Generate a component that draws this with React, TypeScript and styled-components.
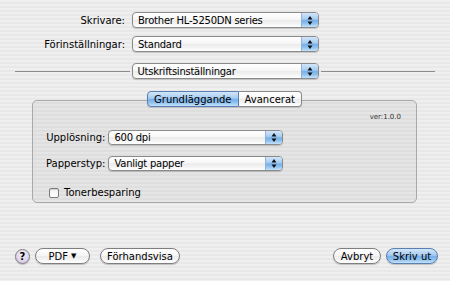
import React from 'react';
import styled, { createGlobalStyle, css } from 'styled-components';

const GlobalStyle = createGlobalStyle`
  html, body {
    margin: 0;
    padding: 0;
  }
  body {
    font-family: "DejaVu Sans", "Liberation Sans", sans-serif;
    font-size: 10px;
    color: #000;
  }
`;

const aquaBlue = css`
  background: linear-gradient(
    to bottom,
    #d2e6fa 0%,
    #a4cbf1 45%,
    #78afe7 52%,
    #8fc1ef 75%,
    #c4e2fb 100%
  );
`;

const aquaWhite = css`
  background: linear-gradient(
    to bottom,
    #ffffff 0%,
    #f7f7f7 45%,
    #ebebeb 52%,
    #f3f3f3 75%,
    #ffffff 100%
  );
`;

const Window = styled.div`
  width: 450px;
  height: 281px;
  box-sizing: border-box;
  padding: 12px 0 17px 0;
  display: flex;
  flex-direction: column;
  background: repeating-linear-gradient(
    to bottom,
    #efefef 0px,
    #efefef 2px,
    #e8e8e8 2px,
    #e8e8e8 4px
  );
`;

const TopForm = styled.div`
  display: grid;
  grid-template-columns: 125px 187px;
  column-gap: 7px;
  row-gap: 8px;
  align-items: center;
`;

const Label = styled.span`
  text-align: right;
  white-space: nowrap;
`;

const SeparatorRow = styled.div`
  display: flex;
  align-items: center;
  gap: 2px;
  margin: 11px 15px 0 15px;
`;

const Line = styled.div`
  flex: 1;
  height: 1px;
  background: #8c8c8c;
`;

const PopupBox = styled.div<{ $width: number; $height?: number }>`
  display: flex;
  align-items: stretch;
  width: ${p => p.$width}px;
  height: ${p => p.$height ?? 16}px;
  box-sizing: border-box;
  border: 1px solid #8a8a8a;
  border-radius: 4px;
  overflow: hidden;
  box-shadow: 0 1px 1px rgba(0, 0, 0, 0.18);
  ${aquaWhite};
`;

const PopupText = styled.span`
  flex: 1;
  padding-left: 5px;
  display: flex;
  align-items: center;
  white-space: nowrap;
  overflow: hidden;
  letter-spacing: -0.25px;
`;

const PopupCap = styled.span`
  width: 16px;
  border-left: 1px solid #8fb0d8;
  display: flex;
  align-items: center;
  justify-content: center;
  ${aquaBlue};
`;

function Arrows() {
  return (
    <svg width="6" height="9" viewBox="0 0 6 9">
      <path d="M3 0 L5.5 3.5 L0.5 3.5 Z" fill="#111" />
      <path d="M0.5 5.5 L5.5 5.5 L3 9 Z" fill="#111" />
    </svg>
  );
}

function Popup({ value, width, height }: { value: string; width: number; height?: number }) {
  return (
    <PopupBox $width={width} $height={height}>
      <PopupText>{value}</PopupText>
      <PopupCap>
        <Arrows />
      </PopupCap>
    </PopupBox>
  );
}

const PanelArea = styled.div`
  margin: 12px 33px 0 32px;
  display: flex;
  flex-direction: column;
`;

const TabStrip = styled.div`
  display: flex;
  justify-content: center;
  margin-bottom: -7px;
  position: relative;
  z-index: 1;
`;

const Tab = styled.div<{ $active?: boolean }>`
  height: 16px;
  box-sizing: border-box;
  padding: 0 6px;
  display: flex;
  align-items: center;
  border: 1px solid #8a8a8a;
  box-shadow: 0 1px 1px rgba(0, 0, 0, 0.15);
  ${p => (p.$active ? aquaBlue : aquaWhite)};
  ${p => p.$active && css`border-color: #5a7fb0;`}

  &:first-child {
    border-radius: 4px 0 0 4px;
  }
  &:last-child {
    border-radius: 0 4px 4px 0;
    border-left: none;
  }
`;

const Panel = styled.div`
  height: 103px;
  box-sizing: border-box;
  border: 1px solid #a9a9a9;
  border-radius: 5px;
  background: rgba(0, 0, 0, 0.04);
  padding: 11px 15px 0 13px;
  display: flex;
  flex-direction: column;
`;

const Version = styled.div`
  align-self: flex-end;
  font-size: 7px;
  color: #333;
  height: 10px;
  line-height: 10px;
`;

const PanelForm = styled.div`
  margin-top: 8px;
  display: grid;
  grid-template-columns: auto 175px;
  column-gap: 3px;
  row-gap: 11px;
  align-items: center;
  justify-content: start;
`;

const CheckRow = styled.label`
  margin-top: 16px;
  margin-left: 3px;
  display: flex;
  align-items: center;
  gap: 5px;
`;

const CheckBox = styled.span`
  width: 10px;
  height: 10px;
  box-sizing: border-box;
  border: 1px solid #7d7d7d;
  border-radius: 2px;
  background: linear-gradient(#f2f2f2, #ffffff);
  box-shadow: inset 0 1px 1px rgba(0, 0, 0, 0.15);
`;

const BottomBar = styled.div`
  margin-top: auto;
  display: flex;
  align-items: center;
  justify-content: space-between;
  padding: 0 12px 0 15px;
`;

const Group = styled.div`
  display: flex;
  align-items: center;
  gap: 5px;
`;

const HelpButton = styled.div`
  width: 15px;
  height: 15px;
  box-sizing: border-box;
  border-radius: 50%;
  border: 1px solid #7e7e7e;
  background: radial-gradient(circle at 50% 35%, #f4effa, #cfc3e2);
  display: flex;
  align-items: center;
  justify-content: center;
  font-weight: bold;
  font-size: 10px;
  box-shadow: 0 1px 1px rgba(0, 0, 0, 0.2);
`;

const PillButton = styled.div<{ $width: number; $primary?: boolean; $gapLeft?: number }>`
  width: ${p => p.$width}px;
  height: 16px;
  box-sizing: border-box;
  border-radius: 8px;
  border: 1px solid ${p => (p.$primary ? '#5a7fb0' : '#7e7e7e')};
  margin-left: ${p => p.$gapLeft ?? 0}px;
  display: flex;
  align-items: center;
  justify-content: center;
  gap: 3px;
  white-space: nowrap;
  box-shadow: 0 1px 1px rgba(0, 0, 0, 0.2);
  ${p => (p.$primary ? aquaBlue : aquaWhite)};
`;

const Caret = styled.span`
  font-size: 7px;
`;

export default function App() {
  return (
    <>
      <GlobalStyle />
      <Window>
        <TopForm>
          <Label>Skrivare:</Label>
          <Popup value="Brother HL-5250DN series" width={187} />
          <Label>Förinställningar:</Label>
          <Popup value="Standard" width={187} />
        </TopForm>
        <SeparatorRow>
          <Line />
          <Popup value="Utskriftsinställningar" width={187} />
          <Line />
        </SeparatorRow>

        <PanelArea>
          <TabStrip>
            <Tab $active>Grundläggande</Tab>
            <Tab>Avancerat</Tab>
          </TabStrip>
          <Panel>
            <Version>ver:1.0.0</Version>
            <PanelForm>
              <Label>Upplösning:</Label>
              <Popup value="600 dpi" width={175} height={15} />
              <Label>Papperstyp:</Label>
              <Popup value="Vanligt papper" width={175} height={15} />
            </PanelForm>
            <CheckRow>
              <CheckBox />
              <span>Tonerbesparing</span>
            </CheckRow>
          </Panel>
        </PanelArea>

        <BottomBar>
          <Group>
            <HelpButton>?</HelpButton>
            <PillButton $width={55}>
              PDF <Caret>▼</Caret>
            </PillButton>
            <PillButton $width={80} $gapLeft={5}>Förhandsvisa</PillButton>
          </Group>
          <Group>
            <PillButton $width={48}>Avbryt</PillButton>
            <PillButton $width={52} $primary>Skriv ut</PillButton>
          </Group>
        </BottomBar>
      </Window>
    </>
  );
}
